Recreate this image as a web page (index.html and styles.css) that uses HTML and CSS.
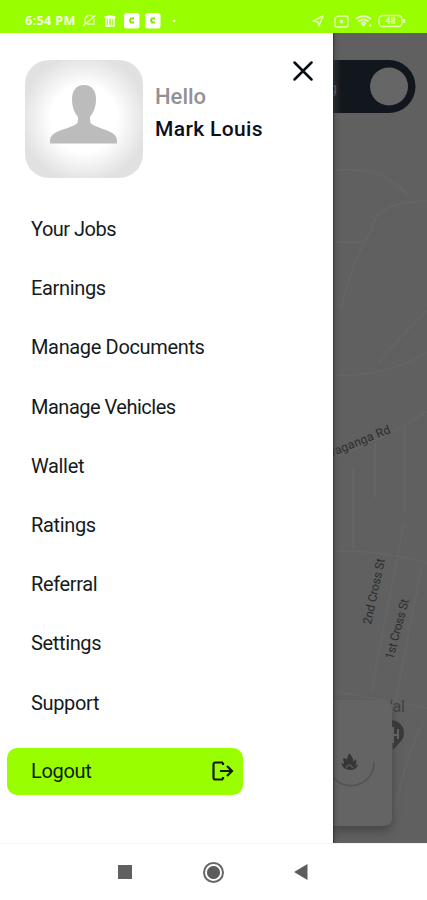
FILE: index.html
```html
<!DOCTYPE html>
<html lang="en">
<head>
    <meta charset="UTF-8">
    <meta name="viewport" content="width=device-width, initial-scale=1.0">
    <title>Driver Menu</title>
    <link rel="stylesheet" href="styles.css">
</head>
<body>
    <div class="phone">
        <header class="status-bar">
            <span class="clock">6:54 PM</span>
            <svg class="left-icons" width="100" height="18" viewBox="0 0 100 18">
                <g fill="none" stroke="#e9ffc4" stroke-width="1.3">
                    <path d="M3 12V8a4.500 4.500 0 0 1 8-3M12 7v5H5M1 14L14 3"/>
                </g>
                <path d="M22.500 5h11M25.500 4h5M24 6h8v8h-8zM26.500 7v6M29.500 7v6" fill="none" stroke="#fff" stroke-width="1.5"/>
                <rect x="42" y="1" width="15.500" height="15.500" rx="2.500" fill="#fff"/>
                <rect x="63" y="1" width="15.500" height="15.500" rx="2.500" fill="#fff"/>
                <path d="M52 6.500h-3l-1 2 1 2h3M73 6.500h-3l-1 2 1 2h3" fill="none" stroke="#8be600" stroke-width="2"/>
                <circle cx="92" cy="9" r="1.300" fill="#fff"/>
            </svg>
            <svg class="right-icons" width="96" height="18" viewBox="0 0 96 18">
                <g fill="none" stroke="#e6ffba" stroke-width="1.4" stroke-linejoin="round">
                    <path d="M2 9L12 4 8 14 7 10z"/>
                    <path d="M24 6l3-2h8q2 0 2 2v7q0 2-2 2H26q-2 0-2-2zM29 8l3 3M32 8l-3 3"/>
                    <path d="M45 7q7.500-6 15 0M47.500 9.500q5-4 10 0M50 11.500q2.500-2 5 0" stroke-width="2"/>
                    <rect x="68" y="3.500" width="23" height="11" rx="3.500"/>
                    <path d="M93 7v4" stroke-width="2.500"/>
                </g>
                <path d="M50 12l2.500 3 2-3z" fill="#e6ffba"/>
                <circle cx="59" cy="13.500" r="1.300" fill="#e6ffba"/>
                <text class="battery" x="79.500" y="12.300">48</text>
            </svg>
        </header>

        <main class="screen">
            <aside class="drawer">
                <div class="profile">
                    <div class="avatar">
                        <svg width="68" height="61" viewBox="0 0 68 61">
                            <path fill="#bcbcbc" d="M34 1C26 1 22 7 22 15C22 24 25 29 28 33V36C28 40 25 41 20 43C10 47 1 48 0 56V59.500H67V56C66 48 57 47 48 43C43 41 40 40 40 36V33C43 29 46 24 46 15C46 7 42 1 34 1Z"/>
                        </svg>
                    </div>
                    <div class="greeting">
                        <div class="hello">Hello</div>
                        <div class="name">Mark Louis</div>
                    </div>
                    <svg class="close" width="20" height="20" viewBox="0 0 20 20">
                        <path d="M1.500 1.500L18.500 18.500M18.500 1.500L1.500 18.500" stroke="#080d15" stroke-width="2.500" stroke-linecap="round"/>
                    </svg>
                </div>

                <ul class="menu">
                    <li class="tight">Your Jobs</li>
                    <li>Earnings</li>
                    <li>Manage Documents</li>
                    <li class="tight">Manage Vehicles</li>
                    <li>Wallet</li>
                    <li>Ratings</li>
                    <li>Referral</li>
                    <li>Settings</li>
                    <li>Support</li>
                </ul>

                <div class="logout">
                    <span>Logout</span>
                    <svg width="22" height="20" viewBox="0 0 22 20" fill="none" stroke="#101c08" stroke-width="2.200">
                        <path d="M11 1.500H3.500Q1.500 1.500 1.500 3.500V16.500Q1.500 18.500 3.500 18.500H11M11 1.500V4M11 18.500V16M8 10H19.500M15 5L20 10L15 15"/>
                    </svg>
                </div>
            </aside>

            <!-- dimmed map behind the drawer -->
            <section class="map">
                <svg width="94" height="810" viewBox="0 0 94 810">
                    <defs>
                        <linearGradient id="shade" x1="0" x2="1">
                            <stop offset="0" stop-color="#222" stop-opacity=".8"/>
                            <stop offset=".25" stop-color="#444" stop-opacity=".35"/>
                            <stop offset="1" stop-color="#555" stop-opacity="0"/>
                        </linearGradient>
                        <filter id="soft" x="-20%" y="-20%" width="140%" height="140%">
                            <feGaussianBlur stdDeviation="4"/>
                        </filter>
                    </defs>
                    <g class="roads">
                        <path d="M0 138Q45 130 75 162M38 198Q42 168 94 168M0 209H30M40 195Q22 220 8 275M94 278Q70 300 45 330M0 342Q50 345 94 320M94 378Q60 402 0 425M42 410V465M72 393V480M0 518Q50 517 94 530M71 490L38 660M89 532L62 670M0 658L94 675M90 690Q70 730 62 780M20 435V515"/>
                    </g>
                    <path class="pill" d="M0 27H56A26.500 26.500 0 0 1 56 80H0Z"/>
                    <circle cx="56" cy="53.500" r="19" fill="#666"/>
                    <text class="online" x="-4" y="60">g</text>
                    <g class="labels">
                        <text transform="translate(-2 424) rotate(-22)" textLength="65">vaganga Rd</text>
                        <text transform="translate(38 592) rotate(-78)" textLength="67">2nd Cross St</text>
                        <text transform="translate(60 627) rotate(-75)" textLength="62">1st Cross St</text>
                    </g>
                    <rect x="-20" y="672" width="80" height="127" rx="10" fill="#4a4a4a" filter="url(#soft)"/>
                    <path d="M0 667H49Q59 667 59 677V785Q59 793 49 793H0Z" fill="#646464"/>
                    <path d="M59 687A13 13 0 0 1 69 707L60 717Z" fill="#393939"/>
                    <path d="M60 694V710M65 696V706M60 702H65" stroke="#626262" stroke-width="2"/>
                    <text class="place" x="57" y="679">'al</text>
                    <path d="M0 744A23 23 0 0 0 41 729" fill="none" stroke="#525252" stroke-width="1.500"/>
                    <g transform="translate(-1 -3)">
                        <path d="M9 733L12 734L11 728L15 729Q16 726 17 723Q22 728 21 732L24 729Q25 734 23 736L26 734Q25 740 18 740Q11 740 9 733Z" fill="#363636"/>
                        <path d="M14 738Q17 732 21 738" fill="none" stroke="#555" stroke-width="1.500"/>
                    </g>
                    <rect width="8" height="810" fill="url(#shade)"/>
                </svg>
            </section>
        </main>

        <footer class="nav-bar">
            <span class="recent"></span>
            <span class="home"></span>
            <svg class="back" width="14" height="16" viewBox="0 0 14 16">
                <path d="M0 8L13.500 0V16Z" fill="#5d5d5d"/>
            </svg>
        </footer>
    </div>
</body>
</html>
```
FILE: styles.css
```css
* {
    box-sizing: border-box;
}

body {
    margin: 0;
    background-color: #fff;
    font-family: Roboto, 'Liberation Sans', sans-serif;
}

.phone {
    width: 427px;
    height: 900px;
    display: flex;
    flex-direction: column;
    overflow: hidden;
}

/* Status bar */
.status-bar {
    height: 33px;
    background-color: #99ff00;
    display: flex;
    align-items: center;
    padding: 8px 20px 0 25px;
    flex-shrink: 0;
}

.clock {
    width: 57px;
    font-family: 'Noto Sans', sans-serif;
    font-size: 12.5px;
    font-weight: 700;
    letter-spacing: 0.4px;
    color: #f6ffe4;
    white-space: nowrap;
}

.right-icons {
    margin-left: auto;
}

.battery {
    font-size: 9px;
    font-weight: 700;
    fill: #e6ffba;
    text-anchor: middle;
}

.screen {
    height: 810px;
    display: flex;
    flex-shrink: 0;
}

/* Drawer */
.drawer {
    width: 333px;
    background-color: #fff;
    flex-shrink: 0;
}

.profile {
    height: 145px;
    display: flex;
    padding: 27px 20px 0 25px;
}

.avatar {
    width: 118px;
    height: 118px;
    border-radius: 24px;
    background: radial-gradient(circle, #fff 0, #fff 40%, #e1e1e1 76%);
    padding: 24px 0 0 25px;
}

.greeting {
    margin-left: 12px;
    padding-top: 22px;
    white-space: nowrap;
}

.hello {
    height: 32px;
    line-height: 30px;
    font-size: 22px;
    font-weight: 500;
    color: #929294;
}

.name {
    line-height: 30px;
    font-size: 21px;
    font-weight: 500;
    letter-spacing: 0.35px;
    color: #0b1018;
}

.close {
    margin: 1px 0 0 auto;
}

.menu {
    list-style-type: none;
    margin: 0;
    padding: 21px 0 0 31px;
}

.menu li {
    height: 59.2px;
    line-height: 60px;
    font-size: 20px;
    letter-spacing: -0.35px;
    color: #151a20;
}

.menu li.tight {
    letter-spacing: -0.5px;
}

.logout {
    width: 236px;
    height: 47px;
    margin: 16px 0 0 7px;
    padding: 0 9px 0 24px;
    border-radius: 10px;
    background-color: #99ff00;
    display: flex;
    align-items: center;
    justify-content: space-between;
    font-size: 20px;
    letter-spacing: -0.3px;
    color: #101c08;
}

/* Map */
.map {
    flex: 1;
    background-color: #606060;
    overflow: hidden;
}

.map svg {
    display: block;
}

.roads {
    fill: none;
    stroke: #656565;
    stroke-width: 1.5;
}

.pill {
    fill: #11171c;
}

.online {
    font-size: 14px;
    fill: #626567;
}

.labels {
    font-size: 12px;
    fill: #292d2f;
}

.place {
    font-size: 16px;
    fill: #414141;
}

/* Navigation bar */
.nav-bar {
    height: 57px;
    border-top: 1px solid #f3f3f3;
    display: flex;
    align-items: center;
    padding: 0 119px 0 118px;
    justify-content: space-between;
}

.recent {
    width: 14px;
    height: 14px;
    background-color: #606060;
}

.home {
    width: 21px;
    height: 21px;
    border: 2px solid #666;
    border-radius: 50%;
    background: radial-gradient(circle, #5c5c5c 0, #5c5c5c 6px, #fff 7px);
}
```
